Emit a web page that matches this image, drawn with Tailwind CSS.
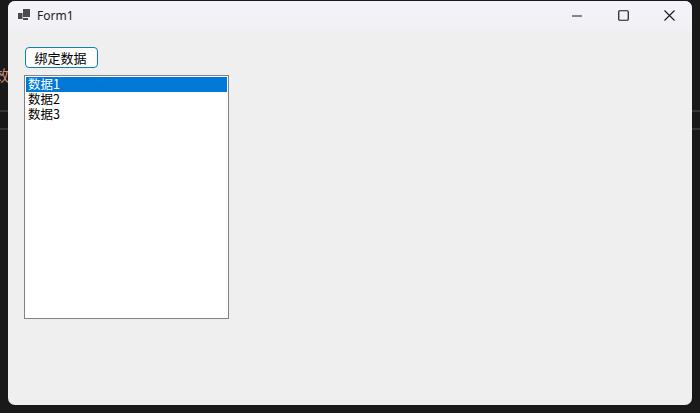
<!DOCTYPE html>
<html lang="zh">
<head>
<meta charset="utf-8">
<script src="https://cdn.jsdelivr.net/npm/@tailwindcss/browser@4"></script>
</head>
<body class="bg-[#191919]">
<div class="relative w-[700px] h-[413px] overflow-hidden bg-[#191919] pt-px px-2 font-['Noto_Sans_CJK_SC','Noto_Sans',sans-serif] text-black">
  <!-- desktop behind the window -->
  <span class="absolute left-[-6px] top-[67px] text-[15px] leading-4 text-[#c98f78]">效</span>
  <div class="absolute left-0 w-2 top-[110px] h-[2px] bg-[#363636]"></div>
  <div class="absolute left-0 w-2 top-[128px] h-[2px] bg-[#363636]"></div>
  <div class="absolute right-0 w-2 top-[110px] h-[2px] bg-[#363636]"></div>
  <div class="absolute right-0 w-2 top-[128px] h-[2px] bg-[#363636]"></div>

  <!-- window -->
  <div class="relative w-[684px] h-[404px] rounded-[7px] overflow-hidden bg-[#efefef] flex flex-col">
    <div class="h-[30px] shrink-0 bg-gradient-to-b from-[#f3f3f9] to-[#f0f0f5] flex items-start pl-[10px]">
      <svg class="w-[12px] h-[11px] mt-[8px] shrink-0" viewBox="0 0 12 11" fill="#4a4a4f">
        <rect x="0" y="4" width="4.5" height="6"/>
        <rect x="5" y="0" width="7" height="8"/>
        <rect x="5" y="9" width="5" height="2"/>
      </svg>
      <span class="ml-[7px] mt-[7px] text-[12px] leading-4 font-['Noto_Sans',sans-serif] text-[#1a1a1a]">Form1</span>
      <div class="ml-auto flex items-start">
        <div class="w-[46px] h-[29px] flex items-center justify-center">
          <svg class="w-[10px] h-[10px]" viewBox="0 0 10 10"><path d="M0 5H10" stroke="#1a1a1a" stroke-width="1"/></svg>
        </div>
        <div class="w-[46px] h-[29px] flex items-center justify-center">
          <svg class="w-[11px] h-[11px]" viewBox="0 0 11 11"><rect x="0.75" y="0.75" width="9.5" height="9.5" rx="1" fill="none" stroke="#1a1a1a" stroke-width="1.2"/></svg>
        </div>
        <div class="w-[46px] h-[29px] flex items-center justify-center">
          <svg class="w-[11px] h-[11px]" viewBox="0 0 11 11"><path d="M0.5 0.5L10.5 10.5M10.5 0.5L0.5 10.5" stroke="#1a1a1a" stroke-width="1.1"/></svg>
        </div>
      </div>
    </div>
    <div class="pl-4 pt-[16px] flex flex-col items-start">
      <button class="ml-px w-[73px] h-[21px] rounded-[4px] border border-[#0a84a8] bg-[#fdfdfd] text-[13px] leading-[17px] text-center pr-[2px]">绑定数据</button>
      <div class="mt-[7px] w-[205px] h-[244px] border border-[#828282] bg-white p-px text-[12.5px] leading-[13px]">
        <div class="h-[15px] bg-[#0078d7] text-white pl-[2px]">数据1</div>
        <div class="h-[15px] pl-[2px]">数据2</div>
        <div class="h-[15px] pl-[2px]">数据3</div>
      </div>
    </div>
  </div>
</div>
</body>
</html>
